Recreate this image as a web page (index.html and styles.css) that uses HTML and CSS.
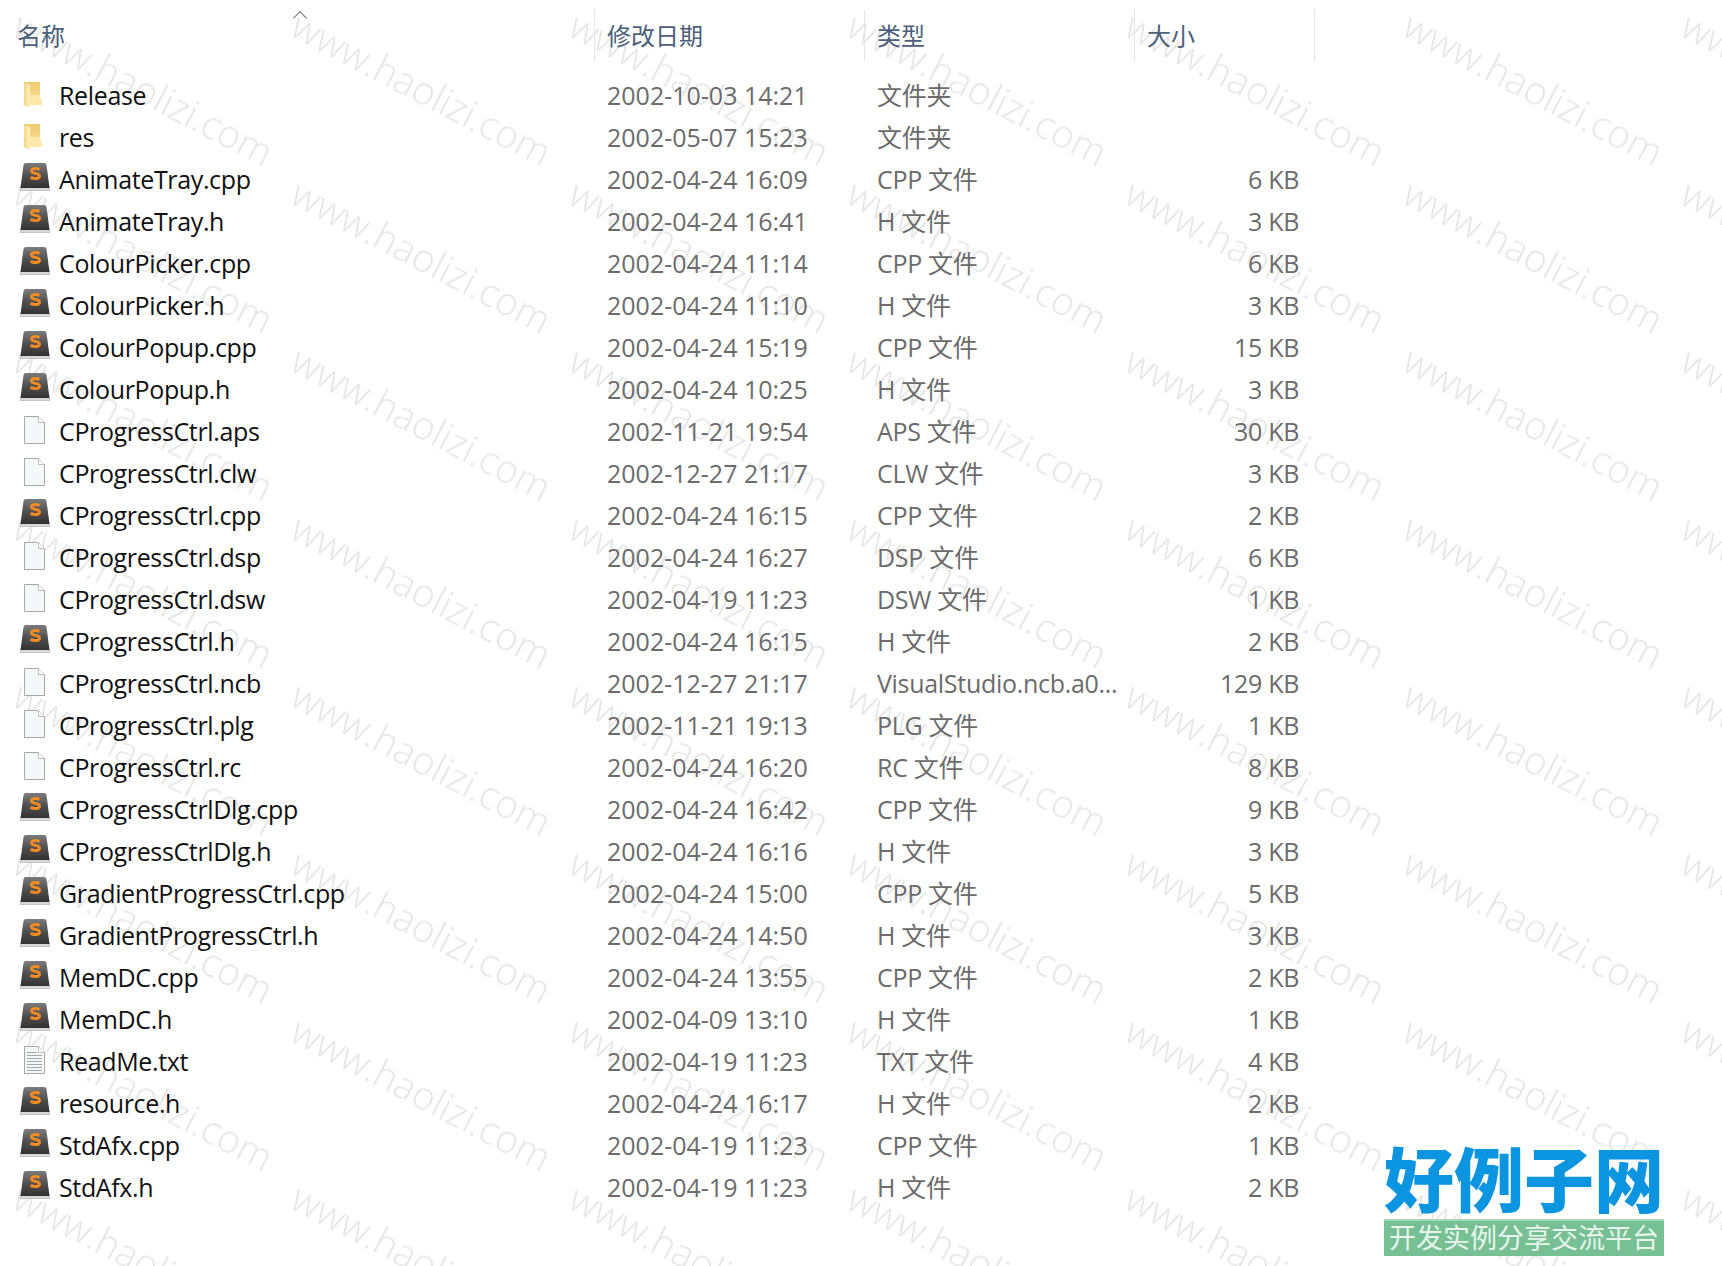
FILE: index.html
```html
<!DOCTYPE html>
<html lang="zh-CN">
<head>
  <meta charset="UTF-8" />
  <title>CProgressCtrl</title>
  <link rel="stylesheet" href="styles.css">
</head>
<body>

  <svg class="icon-defs" width="0" height="0">
    <defs>
      <linearGradient id="folder-back" x1="0" y1="0" x2="0" y2="1">
        <stop offset="0" stop-color="#efcb70" />
        <stop offset="1" stop-color="#f9df95" />
      </linearGradient>
      <linearGradient id="folder-front" x1="0" y1="0" x2="1" y2="0">
        <stop offset="0" stop-color="#f4d684" />
        <stop offset="1" stop-color="#fff2c6" />
      </linearGradient>
      <linearGradient id="sublime-body" x1="0" y1="0" x2="0" y2="1">
        <stop offset="0" stop-color="#7c7c7c" />
        <stop offset=".5" stop-color="#505050" />
        <stop offset="1" stop-color="#323232" />
      </linearGradient>
    </defs>
    <symbol id="i-folder" viewBox="0 0 18 26">
      <path d="M0 0h16v20H0z" fill="url(#folder-back)" />
      <path d="M6 13h9l3 6v4H6z" fill="#fce8a8" />
      <path d="M0 1l6 2v23l-6-3z" fill="url(#folder-front)" />
    </symbol>
    <symbol id="i-sublime" viewBox="0 0 30 28">
      <path d="M1 24h28l1 2.500c0 1-.5 1.500-1.500 1.500h-27C.5 28 0 27.500 0 26.500z" fill="#d8d8d8" stroke="#9a9a9a" stroke-width=".6" />
      <path d="M3.500 2Q4 0 6 0h18q2 0 2.500 2L29.500 25h-29z" fill="url(#sublime-body)" />
      <path d="M19.500 6.500c-2.300-1.500-8-1.700-8 1.500 0 3.200 8 1.500 8 5 0 3.200-5.800 3.100-9 1.200" fill="none" stroke="#f48a22" stroke-width="3" />
    </symbol>
    <symbol id="i-file" viewBox="0 0 21 28">
      <path d="M.5.500h14l6 6v21H.5z" fill="#f6f7f8" stroke="#a9a9a9" />
      <path d="M14.500.500v6h6" fill="#ffffff" stroke="#bcbcbc" />
    </symbol>
    <symbol id="i-text" viewBox="0 0 21 28">
      <path d="M.5.500h14l6 6v21H.5z" fill="#f6f7f8" stroke="#a9a9a9" />
      <path d="M14.500.500v6h6" fill="#ffffff" stroke="#bcbcbc" />
      <path d="M3 6.500h10M3 9.500h15M3 12.500h15M3 15.500h15M3 18.500h15M3 21.500h15M3 24.500h15" stroke="#a6a6a6" />
    </symbol>
  </svg>

  <!-- watermark tile, the extra copies carry the overflow of the neighbour tiles -->
  <svg class="watermark" width="1722" height="1266">
    <defs>
      <pattern id="wm-tile" x="6" y="0" width="278" height="167.500" patternUnits="userSpaceOnUse">
        <text id="wm-text" class="wm-text" x="4" y="35" transform="rotate(27.500 4 35)">www.haolizi.com</text>
        <use href="#wm-text" x="-278" />
        <use href="#wm-text" y="-167.500" />
        <use href="#wm-text" x="-278" y="-167.500" />
      </pattern>
    </defs>
    <rect width="1722" height="1266" fill="url(#wm-tile)" />
  </svg>

  <div class="file-list">
    <div class="head-row">
      <div class="head-cell head-name">名称<span class="sort-arrow"></span></div>
      <div class="head-cell">修改日期</div>
      <div class="head-cell">类型</div>
      <div class="head-cell">大小</div>
    </div>

    <div class="row"><div class="name"><svg class="ico ico-folder"><use href="#i-folder" /></svg>Release</div><div class="cell">2002-10-03 14:21</div><div class="cell kind">文件夹</div><div class="size"></div></div>
    <div class="row"><div class="name"><svg class="ico ico-folder"><use href="#i-folder" /></svg>res</div><div class="cell">2002-05-07 15:23</div><div class="cell kind">文件夹</div><div class="size"></div></div>
    <div class="row"><div class="name"><svg class="ico ico-sublime"><use href="#i-sublime" /></svg>AnimateTray.cpp</div><div class="cell">2002-04-24 16:09</div><div class="cell kind">CPP 文件</div><div class="size">6 KB</div></div>
    <div class="row"><div class="name"><svg class="ico ico-sublime"><use href="#i-sublime" /></svg>AnimateTray.h</div><div class="cell">2002-04-24 16:41</div><div class="cell kind">H 文件</div><div class="size">3 KB</div></div>
    <div class="row"><div class="name"><svg class="ico ico-sublime"><use href="#i-sublime" /></svg>ColourPicker.cpp</div><div class="cell">2002-04-24 11:14</div><div class="cell kind">CPP 文件</div><div class="size">6 KB</div></div>
    <div class="row"><div class="name"><svg class="ico ico-sublime"><use href="#i-sublime" /></svg>ColourPicker.h</div><div class="cell">2002-04-24 11:10</div><div class="cell kind">H 文件</div><div class="size">3 KB</div></div>
    <div class="row"><div class="name"><svg class="ico ico-sublime"><use href="#i-sublime" /></svg>ColourPopup.cpp</div><div class="cell">2002-04-24 15:19</div><div class="cell kind">CPP 文件</div><div class="size">15 KB</div></div>
    <div class="row"><div class="name"><svg class="ico ico-sublime"><use href="#i-sublime" /></svg>ColourPopup.h</div><div class="cell">2002-04-24 10:25</div><div class="cell kind">H 文件</div><div class="size">3 KB</div></div>
    <div class="row"><div class="name"><svg class="ico ico-file"><use href="#i-file" /></svg>CProgressCtrl.aps</div><div class="cell">2002-11-21 19:54</div><div class="cell kind">APS 文件</div><div class="size">30 KB</div></div>
    <div class="row"><div class="name"><svg class="ico ico-file"><use href="#i-file" /></svg>CProgressCtrl.clw</div><div class="cell">2002-12-27 21:17</div><div class="cell kind">CLW 文件</div><div class="size">3 KB</div></div>
    <div class="row"><div class="name"><svg class="ico ico-sublime"><use href="#i-sublime" /></svg>CProgressCtrl.cpp</div><div class="cell">2002-04-24 16:15</div><div class="cell kind">CPP 文件</div><div class="size">2 KB</div></div>
    <div class="row"><div class="name"><svg class="ico ico-file"><use href="#i-file" /></svg>CProgressCtrl.dsp</div><div class="cell">2002-04-24 16:27</div><div class="cell kind">DSP 文件</div><div class="size">6 KB</div></div>
    <div class="row"><div class="name"><svg class="ico ico-file"><use href="#i-file" /></svg>CProgressCtrl.dsw</div><div class="cell">2002-04-19 11:23</div><div class="cell kind">DSW 文件</div><div class="size">1 KB</div></div>
    <div class="row"><div class="name"><svg class="ico ico-sublime"><use href="#i-sublime" /></svg>CProgressCtrl.h</div><div class="cell">2002-04-24 16:15</div><div class="cell kind">H 文件</div><div class="size">2 KB</div></div>
    <div class="row"><div class="name"><svg class="ico ico-file"><use href="#i-file" /></svg>CProgressCtrl.ncb</div><div class="cell">2002-12-27 21:17</div><div class="cell kind">VisualStudio.ncb.a0...</div><div class="size">129 KB</div></div>
    <div class="row"><div class="name"><svg class="ico ico-file"><use href="#i-file" /></svg>CProgressCtrl.plg</div><div class="cell">2002-11-21 19:13</div><div class="cell kind">PLG 文件</div><div class="size">1 KB</div></div>
    <div class="row"><div class="name"><svg class="ico ico-file"><use href="#i-file" /></svg>CProgressCtrl.rc</div><div class="cell">2002-04-24 16:20</div><div class="cell kind">RC 文件</div><div class="size">8 KB</div></div>
    <div class="row"><div class="name"><svg class="ico ico-sublime"><use href="#i-sublime" /></svg>CProgressCtrlDlg.cpp</div><div class="cell">2002-04-24 16:42</div><div class="cell kind">CPP 文件</div><div class="size">9 KB</div></div>
    <div class="row"><div class="name"><svg class="ico ico-sublime"><use href="#i-sublime" /></svg>CProgressCtrlDlg.h</div><div class="cell">2002-04-24 16:16</div><div class="cell kind">H 文件</div><div class="size">3 KB</div></div>
    <div class="row"><div class="name"><svg class="ico ico-sublime"><use href="#i-sublime" /></svg>GradientProgressCtrl.cpp</div><div class="cell">2002-04-24 15:00</div><div class="cell kind">CPP 文件</div><div class="size">5 KB</div></div>
    <div class="row"><div class="name"><svg class="ico ico-sublime"><use href="#i-sublime" /></svg>GradientProgressCtrl.h</div><div class="cell">2002-04-24 14:50</div><div class="cell kind">H 文件</div><div class="size">3 KB</div></div>
    <div class="row"><div class="name"><svg class="ico ico-sublime"><use href="#i-sublime" /></svg>MemDC.cpp</div><div class="cell">2002-04-24 13:55</div><div class="cell kind">CPP 文件</div><div class="size">2 KB</div></div>
    <div class="row"><div class="name"><svg class="ico ico-sublime"><use href="#i-sublime" /></svg>MemDC.h</div><div class="cell">2002-04-09 13:10</div><div class="cell kind">H 文件</div><div class="size">1 KB</div></div>
    <div class="row"><div class="name"><svg class="ico ico-file"><use href="#i-text" /></svg>ReadMe.txt</div><div class="cell">2002-04-19 11:23</div><div class="cell kind">TXT 文件</div><div class="size">4 KB</div></div>
    <div class="row"><div class="name"><svg class="ico ico-sublime"><use href="#i-sublime" /></svg>resource.h</div><div class="cell">2002-04-24 16:17</div><div class="cell kind">H 文件</div><div class="size">2 KB</div></div>
    <div class="row"><div class="name"><svg class="ico ico-sublime"><use href="#i-sublime" /></svg>StdAfx.cpp</div><div class="cell">2002-04-19 11:23</div><div class="cell kind">CPP 文件</div><div class="size">1 KB</div></div>
    <div class="row"><div class="name"><svg class="ico ico-sublime"><use href="#i-sublime" /></svg>StdAfx.h</div><div class="cell">2002-04-19 11:23</div><div class="cell kind">H 文件</div><div class="size">2 KB</div></div>
  </div>

  <div class="logo">
    <div class="logo-title">好例子网</div>
    <div class="logo-sub">开发实例分享交流平台</div>
  </div>

</body>
</html>
```

FILE: styles.css
```css
html, body {
  margin: 0;
  height: 1266px;
  overflow: hidden;
  background-color: #ffffff;
}

body {
  position: relative;
  font-family: "Open Sans", "Noto Sans CJK SC", sans-serif;
  font-size: 25px;
}

.icon-defs {
  position: absolute;
}

.watermark {
  position: absolute;
  top: 0;
  left: 0;
}

.wm-text {
  font-family: "Open Sans", sans-serif;
  font-size: 38.5px;
  font-weight: 300;
  fill: #e6e6e6;
}

.file-list {
  position: relative;
  padding-top: 10px;
}

.head-row,
.row {
  display: grid;
  grid-template-columns: 595px 270px 270px 180px;
}

.head-row {
  height: 51px;
  margin-bottom: 13px;
}

.head-cell {
  position: relative;
  display: flex;
  align-items: center;
  padding: 0 0 3px 12px;
  border-right: 1px solid #e5e5e5;
  box-sizing: border-box;
  color: #4c607a;
  font-size: 24px;
}

.head-name {
  padding-left: 17px;
}

.sort-arrow {
  position: absolute;
  top: 3px;
  left: 295px;
  width: 9px;
  height: 9px;
  border-top: 1px solid #777777;
  border-left: 1px solid #777777;
  transform: rotate(45deg);
}

.row {
  height: 42px;
  line-height: 42px;
  color: #6b6b6b;
}

.name {
  display: flex;
  align-items: center;
  color: #111111;
  letter-spacing: -0.36px;
}

.cell {
  padding-left: 12px;
  white-space: nowrap;
}

.kind {
  letter-spacing: -0.3px;
}

.size {
  padding-right: 16px;
  letter-spacing: -0.3px;
  text-align: right;
}

.ico {
  flex: none;
}

.ico-folder {
  width: 18px;
  height: 26px;
  margin: 0 17px 0 24px;
}

.ico-sublime {
  width: 30px;
  height: 28px;
  margin: 0 9px 4px 20px;
}

.ico-file {
  width: 21px;
  height: 28px;
  margin: 0 14px 2px 24px;
}

.logo {
  position: absolute;
  left: 1384px;
  top: 1142px;
  width: 280px;
}

.logo-title {
  height: 77px;
  color: #0b94e0;
  font-size: 70px;
  font-weight: 900;
  line-height: 77px;
  white-space: nowrap;
}

.logo-sub {
  height: 37px;
  border-top: 2px solid #a5d7b8;
  box-sizing: border-box;
  background-color: #76c094;
  color: #e8f5ec;
  font-size: 27px;
  line-height: 33px;
  text-align: center;
  white-space: nowrap;
}
```
